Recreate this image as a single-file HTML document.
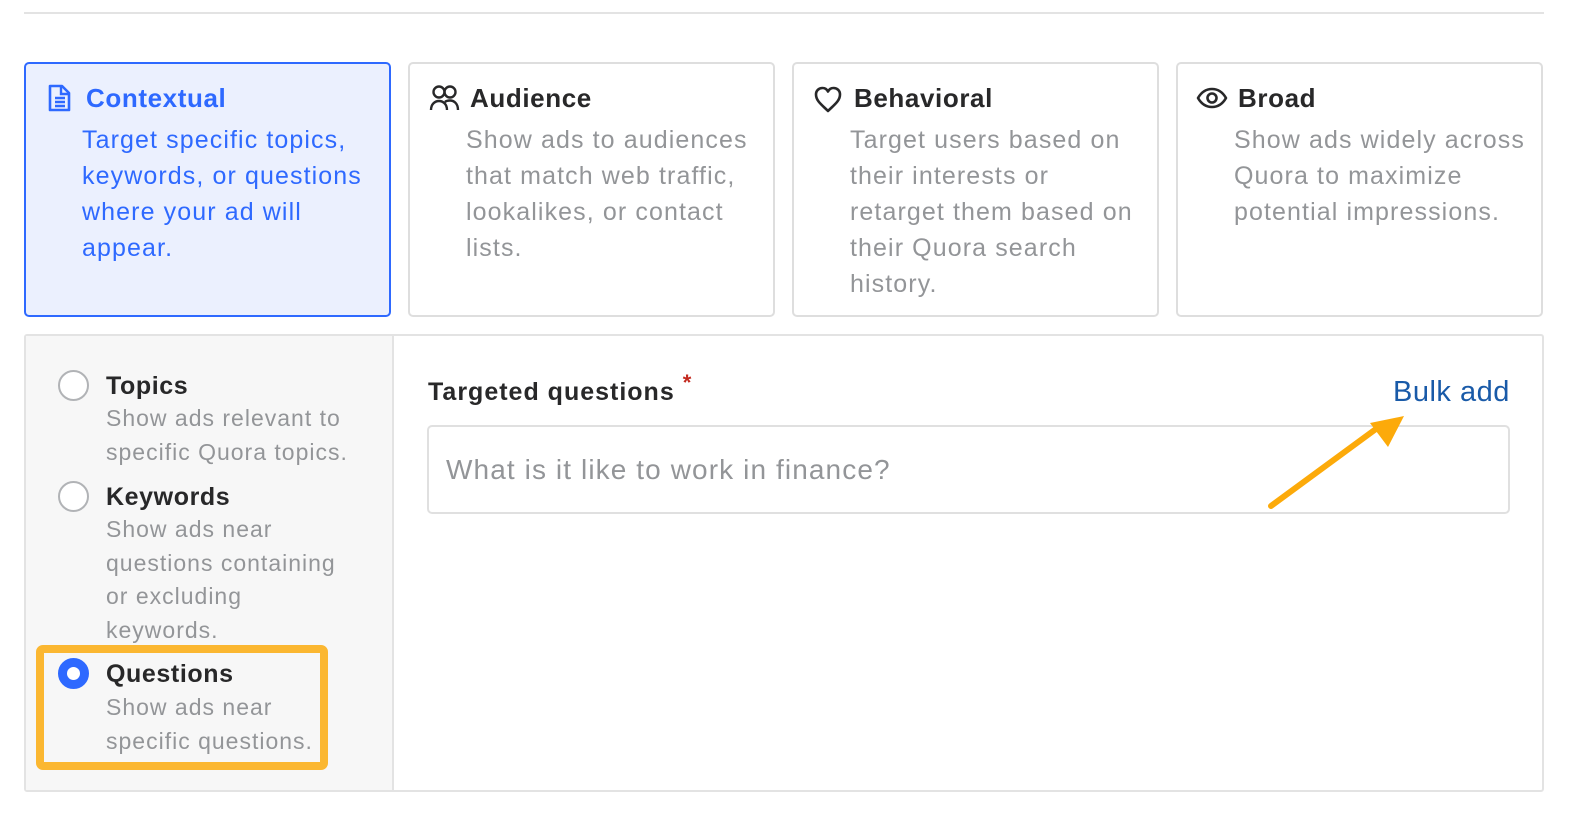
<!DOCTYPE html>
<html style="overflow:hidden"><head><meta charset="utf-8"><style>
*{margin:0;padding:0;box-sizing:border-box}
html,body{width:1580px;height:832px}
body{background:#fff;font-family:"Liberation Sans",sans-serif;position:relative;overflow:hidden;color:#282829}
.a{position:absolute;white-space:nowrap}
.card{position:absolute;top:62px;width:367px;height:255px;border:2px solid #dedede;border-radius:5px;background:#fff}
.card.sel{border-color:#2e69ff;background:#ebf0fe}
.t{position:absolute;font-size:26px;font-weight:bold;line-height:30px;top:19px;letter-spacing:0.6px}
.d{position:absolute;font-size:25px;line-height:36px;color:#939598;top:58px;white-space:nowrap;letter-spacing:1.1px}
.sel .t,.sel .d{color:#2e69ff}
.ic{position:absolute;top:20px}
.rt{position:absolute;left:106px;font-size:25px;font-weight:bold;line-height:30px;color:#282829;letter-spacing:0.6px}
.rd{position:absolute;left:106px;font-size:23px;line-height:33.7px;color:#939598;white-space:nowrap;letter-spacing:1px}
.radio{position:absolute;left:58px;width:31px;height:31px;border-radius:50%;border:2px solid #b1b3b6;background:#fff}
</style></head><body>
<div class="a" style="left:24px;top:12px;width:1520px;height:2px;background:#e3e3e3"></div>

<div class="card sel" style="left:24px">
<svg class="ic" style="left:21px;top:20px" width="26" height="28" viewBox="0 0 26 28"><path d="M3 2h12l7 7v17H3z" fill="none" stroke="#2e69ff" stroke-width="2.6" stroke-linejoin="round"/><path d="M14 2v8h8M8 14h10M8 18h10M8 22h10" stroke="#2e69ff" stroke-width="2.4" fill="none"/></svg>
<div class="t" style="left:60px">Contextual</div>
<div class="d" style="left:56px">Target specific topics,<br>keywords, or questions<br>where your ad will<br>appear.</div>
</div>

<div class="card" style="left:408px">
<svg class="ic" style="left:19px" width="32" height="28" viewBox="0 0 32 28"><circle cx="10" cy="8" r="5.5" fill="none" stroke="#282829" stroke-width="2.4"/><circle cx="21" cy="8" r="5.5" fill="none" stroke="#282829" stroke-width="2.4"/><path d="M2 26c0-6 4-9 8-9s8 3 8 9M16 18c1-1 3-1.5 5-1.5 4 0 8 3 8 9.5" fill="none" stroke="#282829" stroke-width="2.4"/></svg>
<div class="t" style="left:60px">Audience</div>
<div class="d" style="left:56px">Show ads to audiences<br>that match web traffic,<br>lookalikes, or contact<br>lists.</div>
</div>

<div class="card" style="left:792px">
<svg class="ic" style="left:19px;top:21px" width="30" height="28" viewBox="0 0 30 28"><path d="M15 26C9 20 3 16 3 9.5 3 5.5 6 3 9.5 3 12 3 14 4.5 15 6.5 16 4.5 18 3 20.5 3 24 3 27 5.5 27 9.5 27 16 21 20 15 26z" fill="none" stroke="#282829" stroke-width="2.6" stroke-linejoin="round"/></svg>
<div class="t" style="left:60px">Behavioral</div>
<div class="d" style="left:56px">Target users based on<br>their interests or<br>retarget them based on<br>their Quora search<br>history.</div>
</div>

<div class="card" style="left:1176px">
<svg class="ic" style="left:18px;top:22px" width="32" height="24" viewBox="0 0 32 24"><path d="M2 12C6 5 11 3 16 3s10 2 14 9c-4 7-9 9-14 9S6 19 2 12z" fill="none" stroke="#282829" stroke-width="2.6" stroke-linejoin="round"/><circle cx="16" cy="12" r="4.5" fill="none" stroke="#282829" stroke-width="2.6"/></svg>
<div class="t" style="left:60px">Broad</div>
<div class="d" style="left:56px">Show ads widely across<br>Quora to maximize<br>potential impressions.</div>
</div>

<div class="a" style="left:24px;top:334px;width:1520px;height:458px;border:2px solid #e3e3e3;border-radius:3px"></div>
<div class="a" style="left:26px;top:336px;width:368px;height:454px;background:#f7f7f7;border-right:2px solid #e3e3e3"></div>

<div class="a" style="left:36px;top:645px;width:292px;height:125px;border:8px solid #fbb731;border-radius:7px"></div>

<div class="radio" style="top:370px"></div>
<div class="rt" style="top:371px">Topics</div>
<div class="rd" style="top:402px">Show ads relevant to<br>specific Quora topics.</div>

<div class="radio" style="top:481px"></div>
<div class="rt" style="top:482px">Keywords</div>
<div class="rd" style="top:513px">Show ads near<br>questions containing<br>or excluding<br>keywords.</div>

<div class="radio" style="top:658px;border:9px solid #2e69ff"></div>
<div class="rt" style="top:659px">Questions</div>
<div class="rd" style="top:691px">Show ads near<br>specific questions.</div>

<div class="a" style="left:428px;top:377px;font-size:25px;font-weight:bold;line-height:30px;letter-spacing:1px">Targeted questions <span style="color:#c3291f;font-size:22px;position:relative;top:-10px">*</span></div>
<div class="a" style="left:1393px;top:375px;font-size:29px;line-height:34px;color:#195aa8;letter-spacing:0.5px">Bulk add</div>
<div class="a" style="left:427px;top:425px;width:1083px;height:89px;border:2px solid #e0e0e0;border-radius:5px"></div>
<div class="a" style="left:446px;top:453px;font-size:28px;line-height:34px;color:#939598;letter-spacing:1.1px">What is it like to work in finance?</div>

<svg class="a" style="left:0;top:0" width="1580" height="832"><line x1="1271" y1="506" x2="1380" y2="426" stroke="#fcaa0a" stroke-width="6" stroke-linecap="round"/><path d="M1404 416L1370 423L1388 447Z" fill="#fcaa0a"/></svg>
</body></html>
